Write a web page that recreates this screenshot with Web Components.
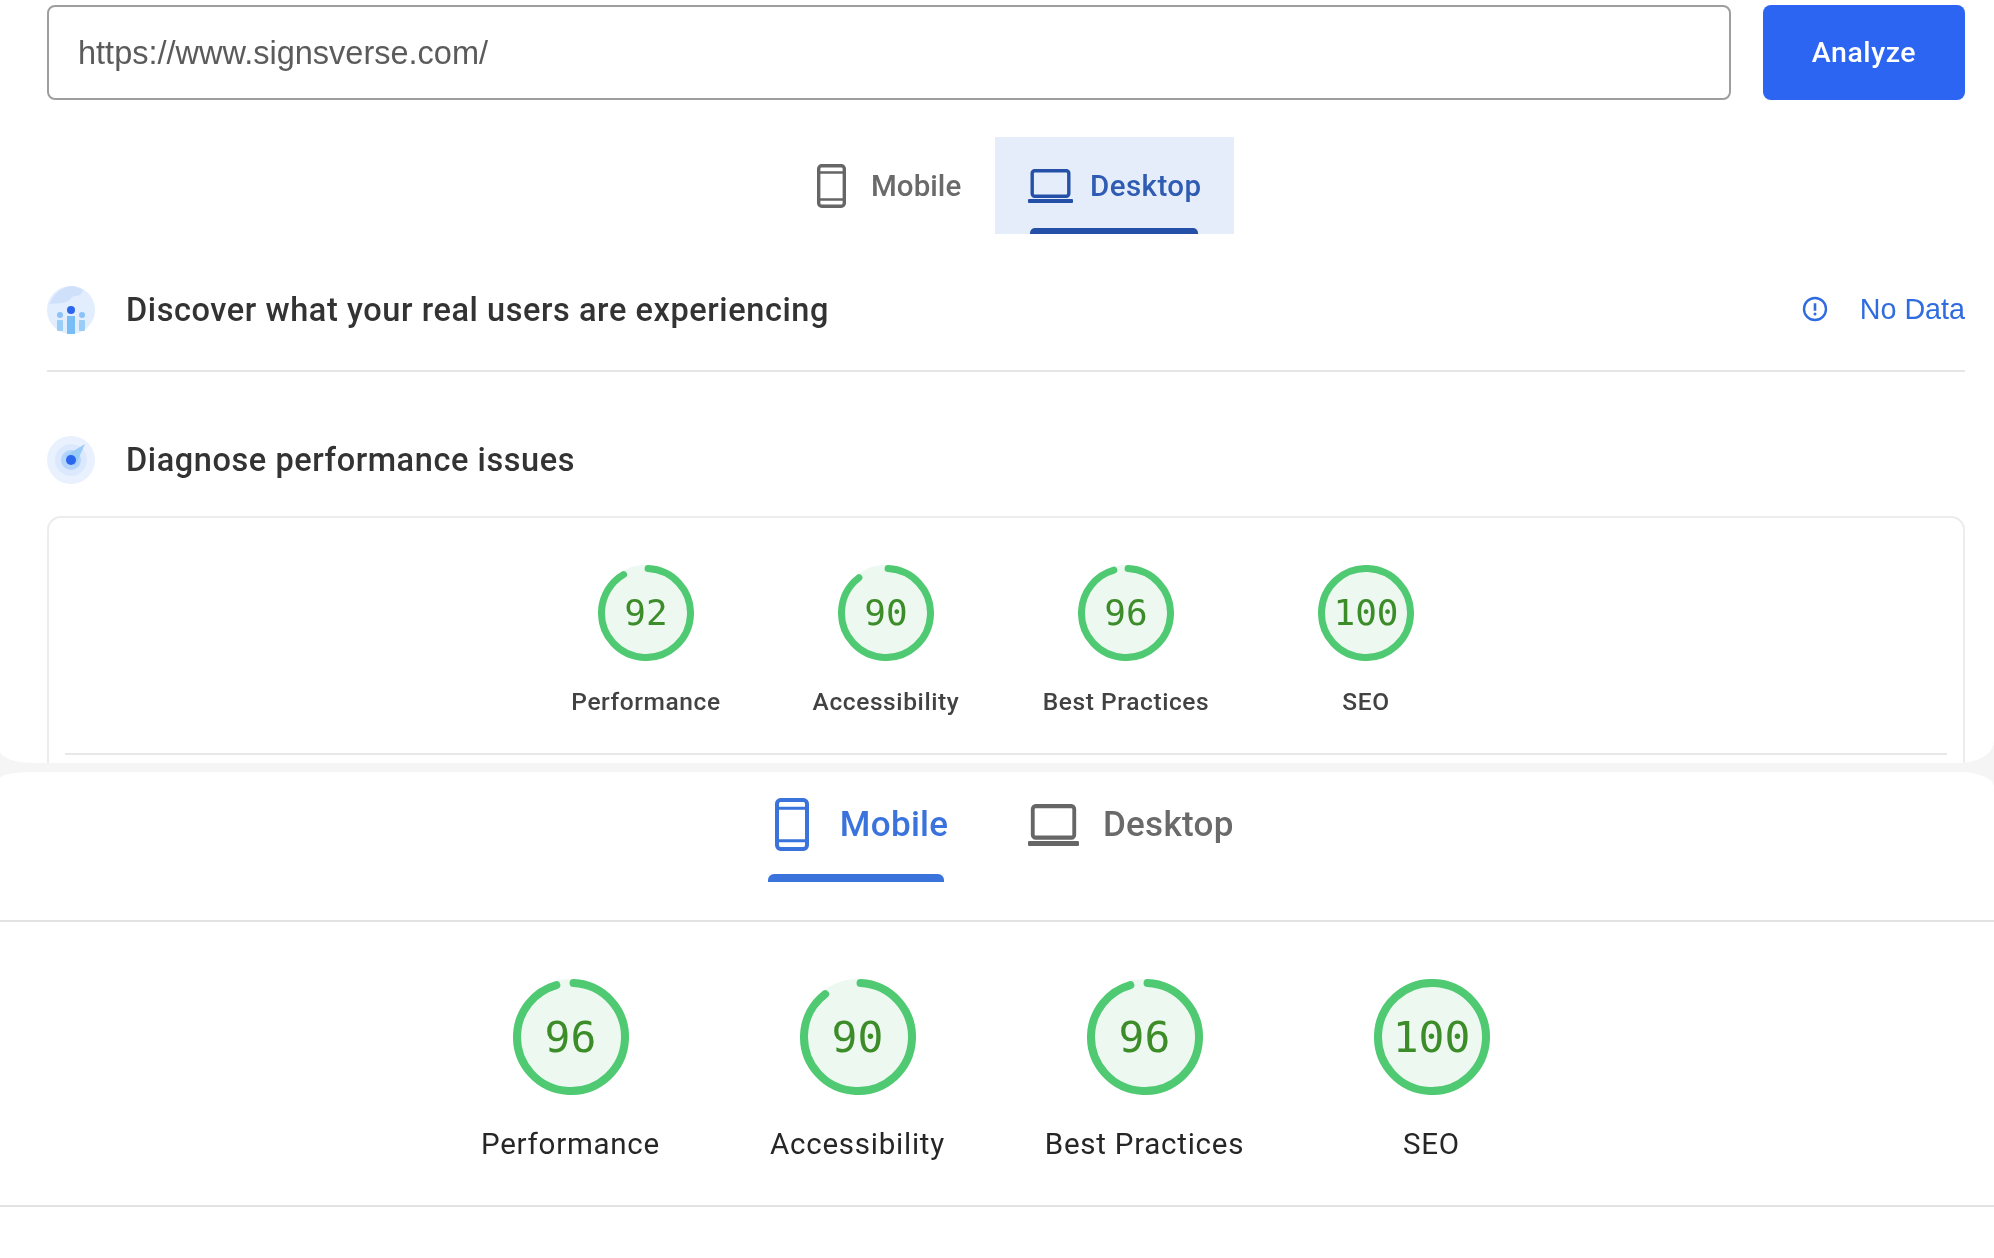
<!DOCTYPE html>
<html lang="en"><head><meta charset="utf-8"><title>PageSpeed Insights</title>
<style>
html,body{margin:0;padding:0;background:#f5f5f5}
body{width:1994px;height:1258px;overflow:hidden;font-family:Roboto,"Liberation Sans",sans-serif}
</style></head><body>
<psi-page>
  <psi-panel slot="top" kind="top">
    <url-bar url="https://www.signsverse.com/" action="Analyze"></url-bar>
    <device-tabs variant="small" selected="desktop"></device-tabs>
    <section-row heading="Discover what your real users are experiencing" icon="globe" top="40" bottom="24" divider>
      <no-data-flag>No Data</no-data-flag>
    </section-row>
    <section-row heading="Diagnose performance issues" icon="radar" top="52" bottom="0"></section-row>
    <report-card>
      <gauge-row variant="small" pairs="92:Performance,90:Accessibility,96:Best Practices,100:SEO"></gauge-row>
    </report-card>
  </psi-panel>
  <psi-panel slot="bottom" kind="bottom">
    <device-tabs variant="large" selected="mobile"></device-tabs>
    <gauge-row variant="large" pairs="96:Performance,90:Accessibility,96:Best Practices,100:SEO"></gauge-row>
  </psi-panel>
</psi-page>
<script>
const PHONE=(c)=>`<svg width="100%" height="100%" viewBox="0 0 29 44" preserveAspectRatio="none" fill="none" stroke="${c}"><rect x="1.7" y="1.7" width="25.6" height="40.6" rx="3" stroke-width="3.4"/><path d="M2 8.5H27M2 35.5H27" stroke-width="2.6"/></svg>`;
const LAPTOP=(c)=>`<svg width="100%" height="100%" viewBox="0 0 45 34" preserveAspectRatio="none" fill="none"><rect x="4.2" y="1.7" width="36.6" height="25.6" rx="2.5" stroke="${c}" stroke-width="3.4"/><rect x="0" y="30" width="45" height="4" rx="1" fill="${c}"/></svg>`;

class PsiPage extends HTMLElement{constructor(){super();this.attachShadow({mode:'open'}).innerHTML=`<style>
:host{display:flex;flex-direction:column;gap:9px;width:1994px;height:1258px;background:#f5f5f5;filter:blur(.45px)}
</style><slot name="top"></slot><slot name="bottom"></slot>`}}
customElements.define('psi-page',PsiPage);

class PsiPanel extends HTMLElement{constructor(){super();this.attachShadow({mode:'open'}).innerHTML=`<style>
:host{display:flex;flex-direction:column;background:#fff;box-sizing:border-box;overflow:hidden}
:host([kind=top]){flex:none;height:763px;padding:5px 29px 0 47px;border-radius:0 0 34px 34px / 0 0 22px 12px}
:host([kind=bottom]){flex:1;border-radius:34px 34px 0 0 / 6px 15px 0 0}
</style><slot></slot>`}}
customElements.define('psi-panel',PsiPanel);

class UrlBar extends HTMLElement{constructor(){super();this.attachShadow({mode:'open'}).innerHTML=`<style>
:host{display:flex;flex:none;gap:32px;height:95px}
.f{flex:1;box-sizing:border-box;border:2px solid #9e9e9e;border-radius:8px;display:flex;align-items:center;padding:2px 29px 0;font:32.5px "Liberation Sans",Arial,sans-serif;color:#5b5b5b}
.b{width:202px;border-radius:8px;background:#2c65f2;color:#fff;display:flex;align-items:center;justify-content:center;font:500 28.5px Roboto,sans-serif;letter-spacing:.55px}
</style><div class="f">${this.getAttribute('url')}</div><div class="b">${this.getAttribute('action')}</div>`}}
customElements.define('url-bar',UrlBar);

class DeviceTabs extends HTMLElement{constructor(){super();const v=this.getAttribute('variant');
const small=v==='small';
if(small){this.attachShadow({mode:'open'}).innerHTML=`<style>
:host{display:flex;flex:none;justify-content:center;margin:37px 0 0 4px;height:97px;font:500 29.5px Roboto,sans-serif}
.t{display:flex;align-items:center;box-sizing:border-box;position:relative;color:#6a6a6a}
.m{width:213px;padding-left:35px;gap:25px;letter-spacing:.05px}
.d{width:239px;padding-left:33px;gap:17px;background:#e6edfa;color:#2f5bb3;letter-spacing:.45px}
.bar{position:absolute;left:35px;bottom:0;width:168px;height:6px;background:#2450a8;border-radius:5px 5px 0 0}
.pi{width:29px;height:44px}.la{width:45px;height:34px}
</style><div class="t m"><span class="pi">${PHONE('#666')}</span><span>Mobile</span></div>
<div class="t d"><span class="la">${LAPTOP('#2450a8')}</span><span>Desktop</span><span class="bar"></span></div>`;}
else{this.attachShadow({mode:'open'}).innerHTML=`<style>
:host{display:flex;flex:none;justify-content:center;gap:79.5px;box-sizing:border-box;height:150px;padding:26px 0 0 8px;border-bottom:2px solid #e2e2e2;font:500 35px Roboto,sans-serif;letter-spacing:.3px}
.t{display:flex;flex-direction:column;align-items:flex-start}
.c{display:flex;align-items:center;height:53px;color:#6a6a6a}
.m{padding-left:7px;gap:30.5px;color:#3b73dd}
.d{gap:24px}
.bar{display:block;margin-top:23px;width:176px;height:8px;background:#3b73dd;border-radius:6px 6px 0 0}
.pi{width:34px;height:53px}.la{width:51px;height:42px}
</style><div class="t"><div class="c m"><span class="pi">${PHONE('#3b73dd')}</span><span>Mobile</span></div><span class="bar"></span></div>
<div class="t"><div class="c d"><span class="la">${LAPTOP('#666')}</span><span>Desktop</span></div></div>`;}
}}
customElements.define('device-tabs',DeviceTabs);

const ICONS={
globe:`<svg width="48" height="48" viewBox="0 0 48 48"><circle cx="24" cy="24" r="24" fill="#e2edfd"/><path d="M3 18C6 8 15 1 24 0c5 0 9 2 12 4-1 4-4 6-8 6-3 0-4 3-7 5-5 3-11 2-18 3z" fill="#cfe0fb"/><circle cx="24" cy="24" r="4" fill="#2b66ee"/><circle cx="13" cy="29" r="3" fill="#8cc2f5"/><circle cx="35" cy="29" r="3" fill="#8cc2f5"/><rect x="20" y="30" width="8" height="18" fill="#78bdf5"/><rect x="10" y="34" width="6" height="11" rx="1" fill="#9ccdf7"/><rect x="32" y="34" width="6" height="11" rx="1" fill="#9ccdf7"/></svg>`,
radar:`<svg width="48" height="48" viewBox="0 0 48 48"><circle cx="24" cy="24" r="24" fill="#e9f1fe"/><circle cx="24" cy="24" r="16" fill="#dbe8fd"/><circle cx="24" cy="24" r="10" fill="#b4d4fa"/><path d="M18 20L38 8 28 30z" fill="#9accf8"/><circle cx="24" cy="24" r="5" fill="#2b66ee"/></svg>`};
class SectionRow extends HTMLElement{constructor(){super();const a=n=>this.getAttribute(n);this.attachShadow({mode:'open'}).innerHTML=`<style>
:host{display:flex;align-items:center;height:72px;flex:none;margin-top:${a('top')}px;padding-bottom:${a('bottom')}px;${this.hasAttribute('divider')?'border-bottom:2px solid #e6e6e6;':''}}
svg{display:block;flex:none}
h2{margin:0 0 0 31px;flex:1;font:500 32.5px Roboto,sans-serif;letter-spacing:.58px;color:#333}
</style>${ICONS[a('icon')]}<h2>${a('heading')}</h2><slot></slot>`}}
customElements.define('section-row',SectionRow);

class NoDataFlag extends HTMLElement{constructor(){super();this.attachShadow({mode:'open'}).innerHTML=`<style>
:host{display:flex;align-items:center;gap:32px;padding-bottom:2px;color:#2f6ce0;font:28.7px "Liberation Sans",Arial,sans-serif}
svg{display:block}
</style><svg width="26" height="26" viewBox="0 0 26 26" fill="none"><circle cx="13" cy="13" r="11" stroke="#2f6ce0" stroke-width="2.4"/><path d="M13 7.2v7.6" stroke="#2f6ce0" stroke-width="2.6"/><circle cx="13" cy="18" r="1.5" fill="#2f6ce0"/></svg><span><slot></slot></span>`}}
customElements.define('no-data-flag',NoDataFlag);

class ReportCard extends HTMLElement{constructor(){super();this.attachShadow({mode:'open'}).innerHTML=`<style>
:host{display:block;flex:none;box-sizing:border-box;height:320px;margin-top:20px;padding:47px 16px 0;border:2px solid #ececec;border-radius:14px}
</style><slot></slot>`}}
customElements.define('report-card',ReportCard);

class GaugeRow extends HTMLElement{constructor(){super();const v=this.getAttribute('variant');
const items=this.getAttribute('pairs').split(',').map(p=>{const[a,b]=p.split(':');return `<score-gauge variant="${v}" value="${a}" label="${b}"></score-gauge>`}).join('');
this.attachShadow({mode:'open'}).innerHTML=`<style>
:host{display:flex;flex:none;justify-content:center;box-sizing:border-box;border-bottom:2px solid #e8e8e8}
:host([variant=small]){height:190px}
:host([variant=large]){height:285px;padding:57px 0 0 8px;border-bottom-color:#e2e2e2}
</style>${items}`}}
customElements.define('gauge-row',GaugeRow);

class ScoreGauge extends HTMLElement{constructor(){super();const v=this.getAttribute('variant'),val=+this.getAttribute('value'),lab=this.getAttribute('label');
const L=v==='large';const size=L?116:96,sw=L?8:7,r=(size-sw)/2,c=2*Math.PI*r;
const pct=val-1.3;
const dash=val>=100?'':`stroke-dasharray="${(pct/100*c).toFixed(2)} ${c.toFixed(2)}" stroke-linecap="round"`;
this.attachShadow({mode:'open'}).innerHTML=`<style>
:host{display:flex;flex-direction:column;align-items:center;width:${L?287:240}px}
.ring{position:relative;width:${size}px;height:${size}px;display:flex;align-items:center;justify-content:center}
svg{position:absolute;inset:0}
.n{position:relative;font:${L?43:36}px "DejaVu Sans Mono",monospace;color:#3c8c2a;padding-bottom:${L?0:2}px}
.l{margin-top:${L?31:26}px;font:${L?'400 29.5px':'500 24.5px'} Roboto,sans-serif;line-height:${L?36:30}px;color:${L?'#262626':'#424242'};letter-spacing:${L?.75:.6}px;white-space:nowrap}
</style><div class="ring"><svg width="${size}" height="${size}" viewBox="0 0 ${size} ${size}"><circle cx="${size/2}" cy="${size/2}" r="${size/2}" fill="#edf8f0"/><circle cx="${size/2}" cy="${size/2}" r="${r}" fill="none" stroke="#50ca72" stroke-width="${sw}" ${dash} transform="rotate(-87.3 ${size/2} ${size/2})"/></svg><span class="n">${val}</span></div><div class="l">${lab}</div>`}}
customElements.define('score-gauge',ScoreGauge);
</script>
</body></html>
